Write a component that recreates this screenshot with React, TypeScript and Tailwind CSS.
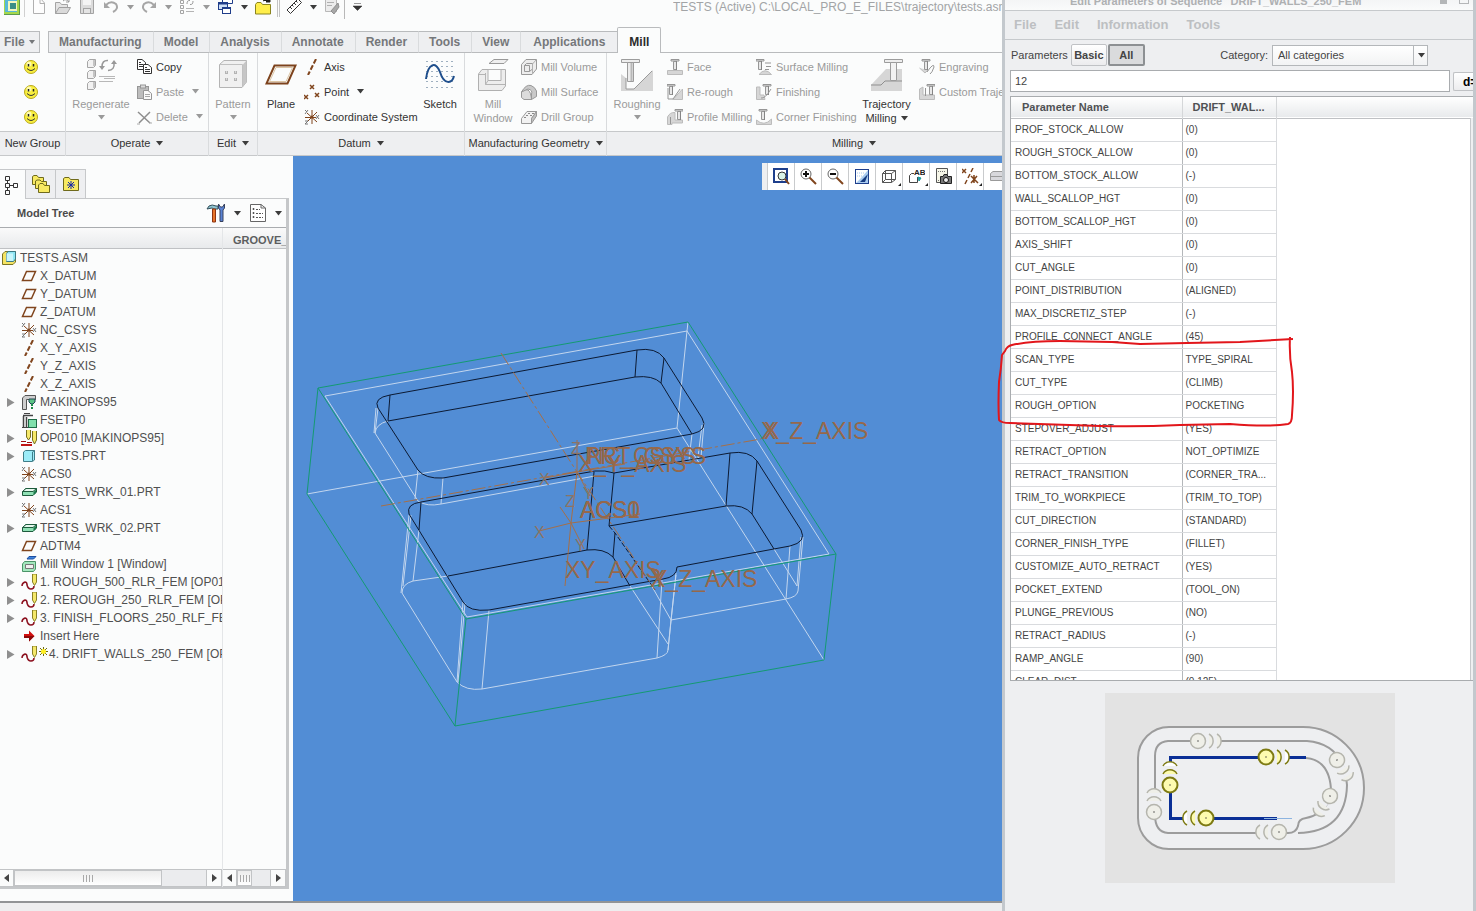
import type { ReactNode } from 'react'
import clsx from 'clsx'

function Svg({ w = 16, h = 16, children }: { w?: number; h?: number; children: ReactNode }) {
  return (
    <svg width={w} height={h} viewBox={`0 0 ${w} ${h}`} fill="none" className="shrink-0" aria-hidden="true">
      {children}
    </svg>
  )
}

function Caret({ muted }: { muted?: boolean }) {
  return (
    <svg width="7" height="5" viewBox="0 0 7 5" className="shrink-0" aria-hidden="true">
      <path d="M0 0H7L3.5 4.5Z" fill={muted ? '#9a9a9a' : '#3c3c3c'} />
    </svg>
  )
}

/* ---------- quick access icons ---------- */

const AppIcon = () => (
  <Svg>
    <rect width="16" height="16" fill="#a5d84c" />
    <rect x="1" y="0" width="12" height="13" fill="#58b8d8" />
    <rect x="4" y="2" width="9" height="10" fill="#f3f7c0" />
    <rect x="6" y="4" width="6" height="6" fill="#3a8f86" />
    <path d="M0 15.5H16M15.5 0V16" stroke="#5c9a50" />
  </Svg>
)
const NewIcon = () => (
  <Svg>
    <path d="M2.5 -1V14.5H13.5V4L9 -1M9 -1V4.5H13.5" stroke="#b0b0b0" fill="#fdfdfd" />
  </Svg>
)
const OpenIcon = () => (
  <Svg>
    <path d="M.5 14.5V3.5H5L6.500 5.500H12.500V8.500" fill="#e4e4e4" stroke="#a4a4a4" />
    <path d="M.5 14.500L4 8.500H15.500L12 14.500Z" fill="#dadada" stroke="#a0a0a0" />
    <path d="M8 2Q11 -1 14 3M14 0V3H11" stroke="#999" />
  </Svg>
)
const SaveIcon = () => (
  <Svg>
    <path d="M1.500 0V14.500H14.500V0" fill="#dcdcdc" stroke="#a4a4a4" />
    <rect x="4" y="0" width="8" height="6" fill="#f4f4f4" />
    <rect x="4.500" y="9.500" width="7" height="5" fill="#e4e4e4" stroke="#a4a4a4" />
  </Svg>
)
const UndoIcon = () => (
  <Svg>
    <path d="M3 6Q8 1 13 5Q16 10 10 13" stroke="#a6a6a6" strokeWidth="2" />
    <path d="M1 3V9H7Z" fill="#a6a6a6" />
  </Svg>
)
const RedoIcon = () => (
  <Svg>
    <path d="M13 6Q8 1 3 5Q0 10 6 13" stroke="#a6a6a6" strokeWidth="2" />
    <path d="M15 3V9H9Z" fill="#a6a6a6" />
  </Svg>
)
const RegenSmallIcon = () => (
  <Svg>
    <path d="M1.500 1.500H4.500V4.500H1.500ZM1.500 6.500H4.500V9.500H1.500ZM1.500 11.500H4.500V14.500H1.500Z" stroke="#a4a4a4" />
    <path d="M7 9.500H15M7 12.500H15" stroke="#b4b4b4" />
    <path d="M8 5Q8 1 11 1.500M14 2Q14 6 11 5.500" stroke="#999" />
  </Svg>
)
const WindowsIcon = () => (
  <Svg>
    <path d="M5.500 0V4.500H15.500V0" fill="#fff" stroke="#1f3d8a" />
    <rect x="1.500" y="3.500" width="9" height="7" fill="#cfe0f6" stroke="#1f3d8a" />
    <path d="M1 4.500H11" stroke="#1f3d8a" strokeWidth="2" />
    <rect x="5.500" y="8.500" width="8" height="6" fill="#fff" stroke="#1f3d8a" />
    <path d="M5 9.500H14" stroke="#1f3d8a" />
  </Svg>
)
const CloseFolderIcon = () => (
  <Svg>
    <path d="M.5 15V5.500L2 3.500H6L7.500 5.500H15.500V15Z" fill="#ffee4a" stroke="#8a8420" />
    <path d="M8 2Q11 -1 14 2M15 -1V3H11Z" stroke="#222" fill="#222" />
  </Svg>
)
const RulerIcon = () => (
  <Svg>
    <path d="M1 11L12 0L15.500 3.500L4.500 14.500Z" fill="#fff" stroke="#333" />
    <path d="M4 8L6 10M6 6L7.500 7.500M8 4L10 6M10 2L11.500 3.500" stroke="#333" />
  </Svg>
)
const PaperIcon = () => (
  <Svg>
    <path d="M1.500 0V12.500H12.500V0" fill="#ececec" stroke="#b8b8b8" />
    <path d="M3 3.500H10M3 6.500H8" stroke="#b0b0b0" />
    <path d="M7 12L14 4L15 8L10 15Z" fill="#a8a8a8" stroke="#8f8f8f" />
  </Svg>
)

/* ---------- ribbon icons ---------- */

const Smiley = () => (
  <Svg>
    <circle cx="8" cy="8" r="6.500" fill="#f8ee3e" stroke="#b9a81c" />
    <circle cx="6" cy="5" r="2.500" fill="#fdfab0" />
    <path d="M5.500 5V7.500M10.500 5V7.500" stroke="#222" strokeWidth="1.500" />
    <path d="M4 9.500Q8 13.500 12 9.500" stroke="#333" />
  </Svg>
)
const RegenerateIcon = () => (
  <Svg w={32} h={33}>
    <g fill="#f2f2f2" stroke="#a6a6a6">
      <path d="M2.500 3.500L4.500 1.500H10.500V7.500L8.500 9.500H2.500Z" />
      <path d="M2.500 14.500L4.500 12.500H10.500V18.500L8.500 20.500H2.500Z" />
      <path d="M2.500 25.500L4.500 23.500H10.500V29.500L8.500 31.500H2.500Z" />
      <path d="M9 2V8M9 13V19M9 24V30" strokeWidth="2" stroke="#c4c4c4" />
    </g>
    <path d="M14 18.500H30M14 23.500H28M19 20.500H30" stroke="#b8b8b8" />
    <path d="M17 9Q17 2 23 2.500M29 5Q30 12 23 12.500" stroke="#989898" strokeWidth="1.500" />
    <path d="M14 8H20L17 12ZM26 6H32L29 2Z" fill="#989898" />
  </Svg>
)
const CopyIcon = () => (
  <Svg>
    <path d="M1.500 .5H6L9.500 3.500V10.500H1.500Z" fill="#fff" stroke="#333" />
    <path d="M3 3.500H5M3 5.500H7M3 7.500H7" stroke="#333" />
    <path d="M7.500 5.500H12L15.500 8.500V14.500H7.500Z" fill="#fff" stroke="#333" />
    <path d="M9 8.500H11M9 10.500H14M9 12.500H14" stroke="#333" />
  </Svg>
)
const PasteIcon = () => (
  <Svg>
    <rect x="1.500" y="2.500" width="11" height="12" fill="#bdbdbd" stroke="#969696" />
    <rect x="4.500" y="1" width="5" height="3" fill="#dcdcdc" stroke="#969696" />
    <path d="M7.500 6.500H12L15.500 9.500V15.500H7.500Z" fill="#fafafa" stroke="#969696" />
    <path d="M9 10.500H14M9 12.500H14" stroke="#a8a8a8" />
  </Svg>
)
const DeleteIcon = () => (
  <Svg>
    <path d="M2 3L14 14M14 3L3 14" stroke="#8d8d8d" strokeWidth="1.500" />
    <path d="M13 14H16M1 15H4" stroke="#aaa" />
  </Svg>
)
const PatternIcon = () => (
  <Svg w={32} h={32}>
    <path d="M2.500 6.500L7 2.500H29.500V24L25 29.500H2.500Z" fill="#f0f0f0" stroke="#b4b4b4" />
    <path d="M25.500 7L29.500 2.500V24L25.500 29Z" fill="#c6c6c6" />
    <path d="M3 6.500H25.500V29" stroke="#c0c0c0" />
    <g fill="#b4b4b4">
      <path d="M8 13H11V16H8ZM17 13H20V16H17ZM8 20H11V23H8ZM17 20H20V23H17Z" />
    </g>
    <path d="M9 14H10M18 14H19M9 21H10M18 21H19" stroke="#fff" />
  </Svg>
)
const PlaneIcon = () => (
  <Svg w={32} h={32}>
    <path d="M9.500 7.500H30.500L22.500 25.500H1.500Z" stroke="#7d431d" strokeWidth="2" />
    <path d="M11 9.500H27.500L21 23.500H4.500Z" stroke="#dcc5a4" />
  </Svg>
)
const AxisIcon = () => (
  <Svg>
    <path d="M12 0L4 16" stroke="#80451d" strokeWidth="2" strokeDasharray="5 2" />
  </Svg>
)
const PointIcon = () => (
  <Svg>
    <path d="M6 1L10 5M10 1L6 5M0 11L4 15M4 11L0 15M11 9L15 13M15 9L11 13" stroke="#80451d" strokeWidth="1.500" />
  </Svg>
)
const CsysIcon = () => (
  <Svg>
    <path d="M8 1V15M1 8.500H12M3 4L13 13M13 3L3 13" stroke="#80451d" />
    <path d="M1 1L3 3M4 1L1 5M12 6L15 10M15 6L12 10M1 12H4L1 15H4" stroke="#777" />
    <circle cx="8" cy="8" r="1.500" fill="#80451d" />
  </Svg>
)
const SketchIcon = () => (
  <Svg w={32} h={32}>
    <path d="M2 3.500H31M2 8.500H31M2 13.500H31M2 18.500H31M2 23.500H31M2 29.500H31" stroke="#9fb0c0" strokeDasharray="2 3" />
    <path d="M2 21C4 5 12 3 16 14C20 27 28 26 30 18" stroke="#1e4e8c" strokeWidth="2" />
  </Svg>
)
const MillWindowIcon = () => (
  <Svg w={32} h={34}>
    <path d="M17 1.500H31L27 5.500H12Z" fill="#efefef" stroke="#999" />
    <path d="M1.500 16L5 11.500H11V22.500H24V11.500H28.500V28L25 32.500H1.500Z" fill="#ededed" stroke="#b0b0b0" />
    <path d="M8.500 15V26.500H28" stroke="#b4b4b4" />
    <path d="M8.500 26.500L11 22.500M11 11.500H24M2 16.500H8" stroke="#b4b4b4" />
  </Svg>
)
const MillVolumeIcon = () => (
  <Svg>
    <path d="M.5 5.500L5 .5H15.500V10L11 15.500H.5Z" fill="#ededed" stroke="#999" />
    <path d="M3.500 6.500H8.500V12.500H3.500ZM5.500 4.500H11.500V10L8.500 12.500M3.500 6.500L5.500 4.500" stroke="#999" />
    <path d="M11.500 5V15M11.500 5L15 1" stroke="#b0b0b0" />
  </Svg>
)
const MillSurfaceIcon = () => (
  <Svg>
    <path d="M.5 13.500V8Q4 4 7 6Q10 8 10.500 15.500H3Z" fill="#dcdcdc" stroke="#999" />
    <path d="M.5 8Q5 0 10 1.500Q14 3 15.500 7V12.500L10.500 15.500V10Q12 6 7 5Z" fill="#c9c9c9" stroke="#999" />
  </Svg>
)
const DrillGroupIcon = () => (
  <Svg>
    <path d="M.5 9.500L6 2.500H15.500L10.500 9.500V14.500H.5Z" fill="#f2f2f2" stroke="#999" />
    <path d="M10.500 9.500L15.500 2.500V7L10.500 14.500Z" fill="#c0c0c0" stroke="#999" />
    <path d="M5 6.500H7M9 6.500H11M7 4.500H9M11 4.500H13M3 8.500H5" stroke="#888" />
  </Svg>
)
const RoughingIcon = () => (
  <Svg w={34} h={34}>
    <path d="M1 16L6 20V31H14L33 12V33H1Z" fill="#d6d6d6" />
    <path d="M6 20V31H14L32 13" stroke="#9a9a9a" />
    <path d="M1.500 1.500H19.500V4.500H1.500Z" fill="#eee" stroke="#9c9c9c" />
    <path d="M7.500 4.500H13.500V23.500H7.500Z" fill="#ececec" stroke="#9c9c9c" />
    <path d="M11.500 5V23" stroke="#b8b8b8" strokeWidth="2" />
  </Svg>
)
const TrajectoryIcon = () => (
  <Svg w={34} h={34}>
    <path d="M1 27L16 11H32V33H1Z" fill="#d6d6d6" />
    <path d="M1 27H11L15 23H32" stroke="#8f8f8f" />
    <path d="M14.500 1.500H32.500V4.500H14.500Z" fill="#eee" stroke="#9c9c9c" />
    <path d="M20.500 4.500H26.500V22.500H20.500Z" fill="#f2f2f2" stroke="#9c9c9c" />
  </Svg>
)

// small greyed-out milling steps: a T shaped tool over differently cut stock
function MillIcon({ tool, stock, extra }: { tool: number; stock: string; extra?: string }) {
  return (
    <Svg>
      <path d={stock} fill="#d6d6d6" stroke="#bcbcbc" />
      <g transform={`translate(${tool} 0)`}>
        <path d="M0 .5H8V2H0ZM2.500 2.500H5.500V10.500H2.500Z" fill="#e8e8e8" stroke="#969696" />
        <path d="M5.500 2V11" stroke="#858585" />
      </g>
      {extra && <path d={extra} stroke="#969696" />}
    </Svg>
  )
}

/* ---------- tree icons ---------- */

const AsmIcon = () => (
  <Svg>
    <path d="M1.500 4L4 1.500H14.500V12L12 14.500H1.500Z" fill="#f5e463" stroke="#7b7524" />
    <path d="M5.500 3.500L7 1.500H14.500V9L12.500 11.500H5.500Z" fill="#8fe6f4" stroke="#3c7a85" />
    <path d="M5.500 3.500H12V11H5.500Z" fill="#c8f5fb" />
  </Svg>
)
const DatumIcon = () => (
  <Svg>
    <path d="M5.500 3.500H14.500L10.500 12.500H1.500Z" stroke="#80451d" strokeWidth="1.500" />
  </Svg>
)
const MachineIcon = () => (
  <Svg>
    <path d="M1.500 15.500V4L4 1.500H14.500V5.500H5.500V15.500Z" fill="#cfcfcf" stroke="#555" />
    <path d="M8 5H14V8L12 10H10L8 8Z" fill="#5cc485" stroke="#245" />
    <path d="M11 10V15" stroke="#1d8a46" strokeWidth="2" strokeDasharray="2 1" />
  </Svg>
)
const FixtureIcon = () => (
  <Svg>
    <path d="M2.500 15.500V4M2 3.500H12M5.500 5V15" stroke="#444" strokeWidth="1.500" />
    <path d="M3 1.500H9M1 15.500H7" stroke="#444" />
    <rect x="7.500" y="7.500" width="8" height="8" fill="#7fe0ac" stroke="#1d6b46" />
  </Svg>
)
const OperationIcon = () => (
  <Svg>
    <path d="M5.500 0V7L7.500 10L9.500 7V0M11.500 1V10L13.500 14L15.500 10V1" fill="#f5e86a" stroke="#77701e" />
    <path d="M0 11.500H5M6 12.500H11" stroke="#a01010" />
    <path d="M0 15H11" stroke="#c01414" strokeWidth="2" />
  </Svg>
)
const PartIcon = () => (
  <Svg>
    <path d="M2.500 4L4.500 2.500H13.500V12L11.500 13.500H2.500Z" fill="#9cecf8" stroke="#3f7d88" />
    <path d="M11.500 4V13M11.500 4L13.500 2.500" stroke="#3f7d88" />
  </Svg>
)
const WorkpieceIcon = () => (
  <Svg>
    <path d="M1.500 7.500L5 4.500H15.500V8L12 11.500H1.500Z" fill="#8fe0b4" stroke="#1d5b3c" />
    <path d="M1.500 7.500L5 4.500H15.500L12 7.500Z" fill="#e5f8ee" stroke="#1d5b3c" />
    <path d="M12.500 8L15 6V9L12.500 11Z" fill="#1d7a4c" />
  </Svg>
)
const MillWindowTreeIcon = () => (
  <Svg>
    <path d="M8 .5H15L12.500 3H6Z" fill="#3d86e0" stroke="#1d4ea0" />
    <path d="M1.500 8L3.500 5.500H14.500V13L12.500 15.500H1.500Z" fill="#a4e8be" stroke="#4b9468" />
    <path d="M4.500 8.500H12.500V12.500H4.500Z" fill="#f0f0f0" stroke="#777" />
  </Svg>
)
const SequenceIcon = () => (
  <Svg>
    <path d="M1 12Q1 9 4 8Q6 8 6 11Q7 15 10 15Q13 15 13 12" stroke="#8c1220" strokeWidth="1.500" />
    <path d="M11.500 0V8L13.500 11.500L15.500 8V0Z" fill="#f5e86a" stroke="#8a8226" />
  </Svg>
)
const InsertIcon = () => (
  <Svg>
    <path d="M3 6H8V2.500L13.500 8L8 13.500V10H3Z" fill="#d01010" />
    <path d="M3 10H8V13.500L13.500 8H3Z" fill="#8c0808" />
  </Svg>
)

/* ---------- ribbon building blocks ---------- */

const ribbonTabs = ['Manufacturing', 'Model', 'Analysis', 'Annotate', 'Render', 'Tools', 'View', 'Applications']

function SmallButton({ icon, label, muted, caret }: { icon: ReactNode; label: string; muted?: boolean; caret?: boolean }) {
  return (
    <button className={clsx('flex h-[25px] items-center whitespace-nowrap', muted ? 'text-[#9a9a9a]' : 'text-[#333]')}>
      {icon}
      <span className="ml-1">{label}</span>
      {caret && <span className="ml-2"><Caret muted={muted} /></span>}
    </button>
  )
}

function BigButton({ icon, lines, muted, caret, inlineCaret }: { icon: ReactNode; lines: string[]; muted?: boolean; caret?: boolean; inlineCaret?: boolean }) {
  return (
    <button className={clsx('flex shrink-0 flex-col items-center', muted ? 'text-[#9a9a9a]' : 'text-[#333]')}>
      <span className="flex h-[43px] items-start pt-1">{icon}</span>
      {lines.map((line, i) => (
        <span key={line} className="flex h-[14px] items-center gap-1">
          {line}
          {inlineCaret && i === lines.length - 1 && <Caret />}
        </span>
      ))}
      {caret && <span className="flex h-3 items-center"><Caret muted={muted} /></span>}
    </button>
  )
}

function Group({ label, className, caret = true, children }: { label: string; className: string; caret?: boolean; children: ReactNode }) {
  return (
    <div className={clsx('flex shrink-0 flex-col border-r border-[#d9dbdd]', className)}>
      <div className="flex h-[78px] pt-px">{children}</div>
      <button className="flex h-[25px] items-center justify-center gap-[6px] border-y border-[#c6c8ca] bg-[#eeeff1] pb-px whitespace-nowrap text-[#333]">
        {label}
        {caret && <Caret />}
      </button>
    </div>
  )
}

function QuickButton({ label, children }: { label: string; children: ReactNode }) {
  return (
    <button aria-label={label} className="flex w-6 shrink-0 justify-center">
      {children}
    </button>
  )
}

function QuickCaret({ muted }: { muted?: boolean }) {
  return (
    <button aria-label="More" className="flex w-[14px] shrink-0 justify-center">
      <Caret muted={muted} />
    </button>
  )
}

function Ribbon() {
  return (
    <header className="shrink-0">
      <div className="flex h-[27px] items-start">
        <div className="flex h-[14px] shrink-0 items-center">
          <QuickButton label="Application"><AppIcon /></QuickButton>
          <span className="mr-[2px] h-5 w-px bg-[#d0d0d0]" />
          <QuickButton label="New"><NewIcon /></QuickButton>
          <QuickButton label="Open"><OpenIcon /></QuickButton>
          <QuickButton label="Save"><SaveIcon /></QuickButton>
          <QuickButton label="Undo"><UndoIcon /></QuickButton>
          <QuickCaret muted />
          <QuickButton label="Redo"><RedoIcon /></QuickButton>
          <QuickCaret muted />
          <QuickButton label="Regenerate"><RegenSmallIcon /></QuickButton>
          <QuickCaret muted />
          <QuickButton label="Windows"><WindowsIcon /></QuickButton>
          <QuickCaret />
          <QuickButton label="Close"><CloseFolderIcon /></QuickButton>
          <span className="mx-[2px] h-5 w-[3px] border-x border-[#c4c4c4]" />
          <QuickButton label="Measure"><RulerIcon /></QuickButton>
          <QuickCaret />
          <QuickButton label="Erase"><PaperIcon /></QuickButton>
          <span className="mr-2 h-6 w-px bg-[#b8b8b8]" />
          <button aria-label="Customize toolbar">
            <Svg w={9} h={8}>
              <path d="M1 .5H8M0 3H9L4.500 7.500Z" stroke="#333" fill="#333" strokeWidth=".5" />
            </Svg>
          </button>
        </div>
        <h1 className="ml-auto w-[329px] overflow-hidden text-[12px] leading-[14px] whitespace-nowrap text-[#a2a4a6]">
          {'TESTS (Active) C:\\LOCAL_PRO_E_FILES\\trajectory\\tests.asm'}
        </h1>
      </div>

      <nav className="flex h-[26px] items-end text-[12px] font-bold text-[#75777a]">
        <button className="mr-2 flex h-[22px] w-10 shrink-0 items-center gap-1 border-y border-r border-[#b9bbbd] bg-[#eeeff1] pl-1">
          File
          <svg width="6" height="4" viewBox="0 0 6 4"><path d="M0 0H6L3 4Z" fill="#75777a" /></svg>
        </button>
        {ribbonTabs.map((tab, i) => (
          <button
            key={tab}
            className={clsx(
              'h-[22px] shrink-0 border-y border-y-[#b9bbbd] bg-[#eeeff1]',
              i === 0 && 'border-l border-l-[#b9bbbd]',
              i < ribbonTabs.length - 1 ? 'border-r border-r-[#d9dbdd] pr-[11px] pl-[10px]' : 'px-3',
            )}
          >
            {tab}
          </button>
        ))}
        <button className="h-[26px] shrink-0 rounded-t-xs border-x border-t border-[#b9bbbd] px-[11px] pt-[3px] text-[#2b2b2b]">Mill</button>
        <span className="h-px flex-1 bg-[#b9bbbd]" />
      </nav>

      <div className="flex overflow-hidden text-[11px] leading-[14px]">
        <Group label="New Group" caret={false} className="w-[66px]">
          <div className="flex flex-1 flex-col items-center pr-1">
            {['first', 'second', 'third'].map((n) => (
              <button key={n} aria-label={`New Group ${n}`} className="flex h-[25px] items-center"><Smiley /></button>
            ))}
          </div>
        </Group>
        <Group label="Operate" className="w-[143px]">
          <div className="flex w-[70px] justify-center">
            <BigButton icon={<RegenerateIcon />} lines={['Regenerate']} muted caret />
          </div>
          <div>
            <SmallButton icon={<CopyIcon />} label="Copy" />
            <SmallButton icon={<PasteIcon />} label="Paste" muted caret />
            <SmallButton icon={<DeleteIcon />} label="Delete" muted caret />
          </div>
        </Group>
        <Group label="Edit" className="w-[49px]">
          <div className="flex flex-1 justify-center">
            <BigButton icon={<PatternIcon />} lines={['Pattern']} muted caret />
          </div>
        </Group>
        <Group label="Datum" className="w-[207px]">
          <div className="flex w-[46px] justify-center">
            <BigButton icon={<PlaneIcon />} lines={['Plane']} />
          </div>
          <div className="w-28">
            <SmallButton icon={<AxisIcon />} label="Axis" />
            <SmallButton icon={<PointIcon />} label="Point" caret />
            <SmallButton icon={<CsysIcon />} label="Coordinate System" />
          </div>
          <div className="flex flex-1 justify-center">
            <BigButton icon={<SketchIcon />} lines={['Sketch']} />
          </div>
        </Group>
        <Group label="Manufacturing Geometry" className="w-[142px]">
          <div className="flex w-14 justify-center">
            <BigButton icon={<MillWindowIcon />} lines={['Mill', 'Window']} muted />
          </div>
          <div>
            <SmallButton icon={<MillVolumeIcon />} label="Mill Volume" muted />
            <SmallButton icon={<MillSurfaceIcon />} label="Mill Surface" muted />
            <SmallButton icon={<DrillGroupIcon />} label="Drill Group" muted />
          </div>
        </Group>
        <Group label="Milling" className="w-[495px] grow">
          <div className="flex w-[60px] shrink-0 justify-center">
            <BigButton icon={<RoughingIcon />} lines={['Roughing']} muted caret />
          </div>
          <div className="w-[89px] shrink-0">
            <SmallButton icon={<MillIcon tool={4} stock="M.5 11.500H15.500V15.500H.5Z" />} label="Face" muted />
            <SmallButton icon={<MillIcon tool={0} stock="M6 15.500L15.500 5V15.500Z" extra="M1 4V15H6L13 5" />} label="Re-rough" muted />
            <SmallButton icon={<MillIcon tool={8} stock="M.5 15.500V8Q3 3 8 3.500V11H15.500V14H5V15.500Z" extra="M3.500 15V8" />} label="Profile Milling" muted />
          </div>
          <div className="w-[100px] shrink-0">
            <SmallButton icon={<MillIcon tool={0} stock="M3 15.500Q9 8 15.500 15.500Z" extra="M9 4H15M10 7.500H15M9 10.500H13" />} label="Surface Milling" muted />
            <SmallButton icon={<MillIcon tool={7} stock="M.5 3H4V11H8L9 15.500H.5Z" extra="M5 14Q9 15 15 5" />} label="Finishing" muted />
            <SmallButton icon={<MillIcon tool={3} stock="M.5 11Q8 18 15.500 10V15.500H.5Z" />} label="Corner Finishing" muted />
          </div>
          <div className="flex w-[61px] shrink-0 justify-center">
            <BigButton icon={<TrajectoryIcon />} lines={['Trajectory', 'Milling']} inlineCaret />
          </div>
          <div className="ml-[2px] shrink-0">
            <SmallButton icon={<MillIcon tool={3} stock="M.5 9L6 14L9 11" extra="M8 13Q15 3 15 8Q13 14 11 15" />} label="Engraving" muted />
            <SmallButton icon={<MillIcon tool={8} stock="M.5 15.500V5L4 3V11H15.500V15.500Z" extra="M6.500 4V12" />} label="Custom Trajectory" muted />
          </div>
        </Group>
      </div>
    </header>
  )
}

/* ---------- model tree ---------- */

type TreeItem = { icon: ReactNode; label: string; branch?: boolean; flag?: boolean }

const treeItems: TreeItem[] = [
  { icon: <DatumIcon />, label: 'X_DATUM' },
  { icon: <DatumIcon />, label: 'Y_DATUM' },
  { icon: <DatumIcon />, label: 'Z_DATUM' },
  { icon: <CsysIcon />, label: 'NC_CSYS' },
  { icon: <AxisIcon />, label: 'X_Y_AXIS' },
  { icon: <AxisIcon />, label: 'Y_Z_AXIS' },
  { icon: <AxisIcon />, label: 'X_Z_AXIS' },
  { icon: <MachineIcon />, label: 'MAKINOPS95', branch: true },
  { icon: <FixtureIcon />, label: 'FSETP0' },
  { icon: <OperationIcon />, label: 'OP010 [MAKINOPS95]', branch: true },
  { icon: <PartIcon />, label: 'TESTS.PRT', branch: true },
  { icon: <CsysIcon />, label: 'ACS0' },
  { icon: <WorkpieceIcon />, label: 'TESTS_WRK_01.PRT', branch: true },
  { icon: <CsysIcon />, label: 'ACS1' },
  { icon: <WorkpieceIcon />, label: 'TESTS_WRK_02.PRT', branch: true },
  { icon: <DatumIcon />, label: 'ADTM4' },
  { icon: <MillWindowTreeIcon />, label: 'Mill Window 1 [Window]' },
  { icon: <SequenceIcon />, label: '1. ROUGH_500_RLR_FEM [OP010]', branch: true },
  { icon: <SequenceIcon />, label: '2. REROUGH_250_RLR_FEM [OP010]', branch: true },
  { icon: <SequenceIcon />, label: '3. FINISH_FLOORS_250_RLF_FEM [OP010]', branch: true },
  { icon: <InsertIcon />, label: 'Insert Here' },
  { icon: <SequenceIcon />, label: '4. DRIFT_WALLS_250_FEM [OP010]', branch: true, flag: true },
]

function ScrollBar({ thumb }: { thumb: string }) {
  return (
    <div className="flex h-[18px] border-y border-[#c2c4c6] bg-[#ebecee]">
      <button aria-label="Scroll left" className="flex w-[14px] shrink-0 items-center justify-center border-r border-[#c2c4c6] bg-[#fafbfb]">
        <svg width="5" height="8" viewBox="0 0 5 8"><path d="M5 0V8L0 4Z" fill="#444" /></svg>
      </button>
      <div className="min-w-0 flex-1">
        <div className={clsx('flex h-full items-center justify-center gap-[2px] border border-[#c2c4c6] bg-linear-to-b from-[#ececec] to-white', thumb)}>
          {[1, 2, 3, 4].map((n) => <span key={n} className="h-[7px] w-px bg-[#a9a9a9]" />)}
        </div>
      </div>
      <button aria-label="Scroll right" className="flex w-4 shrink-0 items-center justify-center border-x border-[#c2c4c6] bg-[#fafbfb]">
        <svg width="5" height="8" viewBox="0 0 5 8"><path d="M0 0V8L5 4Z" fill="#444" /></svg>
      </button>
    </div>
  )
}

function ModelTree() {
  return (
    <aside className="flex w-[293px] shrink-0 flex-col pt-[13px] pr-1 pb-3">
      <div className="flex h-[30px] shrink-0">
        <button aria-label="Model Tree" className="flex w-[26px] items-center justify-center border-t border-r border-[#c6c8ca] pr-1">
          <Svg w={15} h={20}>
            <path d="M2.500 1.500H6.500V5.500H2.500ZM2.500 8.500H6.500V12.500H2.500ZM2.500 15.500H6.500V19.500H2.500ZM10.500 8.500H14.500V12.500H10.500ZM4.500 5.500V8.500M4.500 12.500V15.500M6.500 10.500H10.500" stroke="#333" />
          </Svg>
        </button>
        <button aria-label="Folder Browser" className="flex w-[30px] items-center justify-center border-t border-r border-b border-[#c6c8ca] bg-[#eeeff1]">
          <Svg w={20} h={20}>
            <g fill="#f8ea62" stroke="#6f6a1c">
              <path d="M1.500 10.500V2.500L3 1.500H6L7.500 3.500H12.500V10.500Z" />
              <path d="M4.500 14.500V7L6 6H9L10.500 7.500H15.500V14.500Z" />
              <path d="M7.500 18.500V11L9 9.500H12L13.500 11.500H18.500V18.500Z" />
            </g>
          </Svg>
        </button>
        <button aria-label="Favorites" className="flex w-[30px] items-center justify-center border-t border-r border-b border-[#c6c8ca] bg-[#eeeff1]">
          <Svg w={18} h={18}>
            <path d="M1.500 15.500V3.500L3 2.500H7L8.500 4.500H16.500V15.500Z" fill="#f8ea62" stroke="#6f6a1c" />
            <path d="M9 6V14M5 10H13M6 7L12 13M12 7L6 13" stroke="#1428a8" />
          </Svg>
        </button>
        <span className="flex-1 border-b border-[#c6c8ca]" />
      </div>

      <div className="flex min-h-0 flex-1 flex-col border-r-[3px] border-b-2 border-[#c5c7c9]">
        <div className="flex h-[29px] shrink-0 items-center border-b border-[#a9acaf] pr-1 pl-[17px] text-[11px] font-bold text-[#4b4b4b]">
          <h2 className="flex-1">Model Tree</h2>
          <button aria-label="Settings" className="flex items-center gap-2">
            <Svg w={20} h={20}>
              <path d="M1 6L3 3Q6 1 10 3H12V6H8L6 5Z" fill="#8fc4d0" stroke="#35505c" />
              <path d="M6.500 6H9.500V19H6.500Z" fill="#e8752a" stroke="#8d3410" />
              <path d="M12.500 1V5L14 7V18.500H17V7L18.500 5V1L16.500 4H14.500Z" fill="#5a83d4" stroke="#38425e" />
            </Svg>
            <Caret />
          </button>
          <button aria-label="Show" className="ml-2 flex items-center gap-2">
            <Svg w={18} h={20}>
              <path d="M1.500 1.500H12L16.500 5V18.500H1.500ZM12 1.500V5H16.500" fill="#fff" stroke="#666" />
              <path d="M7 6.500H11M7 10.500H14M7 14.500H14" stroke="#555" strokeDasharray="2 1" />
              <path d="M4 5.500H5V6.500H4ZM4 9.500H5V10.500H4ZM4 13.500H5V14.500H4Z" stroke="#555" />
            </Svg>
            <Caret />
          </button>
        </div>

        <div className="flex min-h-0 flex-1">
          <div className="flex w-[223px] shrink-0 flex-col border-r border-[#e4e6e8]">
            <div className="h-[21px] shrink-0 border-b border-[#bfc1c4] bg-linear-to-b from-[#fafafa] to-[#e8eaec]" />
            <ul className="min-h-0 flex-1 overflow-hidden text-[12px] text-[#505050]">
              <li className="flex h-[18px] items-center gap-[3px] pl-px"><AsmIcon />TESTS.ASM</li>
              {treeItems.map((item) => (
                <li key={item.label} className="flex h-[18px] items-center pl-[7px] whitespace-nowrap">
                  <span className="w-[14px] shrink-0">
                    {item.branch && (
                      <svg width="8" height="9" viewBox="0 0 8 9"><path d="M0 0V9L7.500 4.500Z" fill="#8f8f8f" /></svg>
                    )}
                  </span>
                  {item.icon}
                  {item.flag && (
                    <span className="ml-[2px] mb-1">
                      <Svg w={9} h={10}>
                        <path d="M4.500 0V9M0 4.500H9M1 1L8 8M8 1L1 8" stroke="#6d6a10" />
                        <circle cx="4.500" cy="4.500" r="2.500" fill="#ffef20" />
                      </Svg>
                    </span>
                  )}
                  <span className={item.flag ? 'ml-px' : 'ml-[3px]'}>{item.label}</span>
                </li>
              ))}
            </ul>
            <ScrollBar thumb="w-[148px]" />
          </div>
          <div className="flex min-w-0 flex-1 flex-col">
            <div className="h-[21px] shrink-0 overflow-hidden border-b border-[#bfc1c4] bg-linear-to-b from-[#fafafa] to-[#e8eaec] pt-1 pl-[10px] text-[11px] leading-[16px] font-bold whitespace-nowrap text-[#5c5e60]">
              GROOVE_
            </div>
            <div className="flex-1" />
            <ScrollBar thumb="w-[15px]" />
          </div>
        </div>
      </div>
    </aside>
  )
}

/* ---------- graphics area ---------- */

const viewTools = [
  {
    label: 'Refit',
    icon: (
      <>
        <rect x="1" y="1" width="13" height="13" fill="#fff" stroke="#1e3f8c" strokeWidth="2" />
        <circle cx="9" cy="8" r="4" fill="#d8f2e6" stroke="#333" />
        <path d="M12 11L16 16" stroke="#80451d" strokeWidth="2" />
      </>
    ),
  },
  {
    label: 'Zoom In',
    icon: (
      <>
        <circle cx="6" cy="6" r="5" fill="#fff" stroke="#666" />
        <path d="M3 6H9M6 3V9" stroke="#111" strokeWidth="2" />
        <path d="M9.500 9.500L16 16" stroke="#80451d" strokeWidth="2" />
      </>
    ),
  },
  {
    label: 'Zoom Out',
    icon: (
      <>
        <circle cx="6" cy="6" r="5" fill="#fff" stroke="#666" />
        <path d="M3 6H9" stroke="#111" strokeWidth="2" />
        <path d="M9.500 9.500L16 16" stroke="#80451d" strokeWidth="2" />
      </>
    ),
  },
  {
    label: 'Repaint',
    icon: (
      <>
        <rect x="1.500" y="1.500" width="13" height="14" fill="#fff" stroke="#1e3f8c" />
        <path d="M2 15L8 9L14 2V15Z" fill="#a9ccf0" />
        <path d="M6 14L14 6L11 14Z" fill="#153a80" />
        <path d="M3 5H10M3 8H8" stroke="#a5c8ee" strokeDasharray="1 1" />
      </>
    ),
  },
  {
    label: 'Display Style',
    menu: true,
    icon: (
      <path d="M1.500 5.500H10.500V14.500H1.500ZM4.500 2.500H14.500V11.500H4.500ZM1.500 5.500L4.500 2.500M10.500 5.500L14.500 2.500M10.500 14.500L14.500 11.500M1.500 14.500L4.500 11.500" stroke="#555" />
    ),
  },
  {
    label: 'Saved Orientations',
    menu: true,
    icon: (
      <>
        <path d="M1.500 7.500L3.500 5.500H6M1.500 7.500V14.500H9.500V9" stroke="#444" />
        <path d="M10 9L13 10L11 13Z" fill="#1f9aa0" stroke="#1f9aa0" />
        <text x="6" y="7" fontSize="8" fontWeight="bold" fill="#222">AB</text>
      </>
    ),
  },
  {
    label: 'View Manager',
    icon: (
      <>
        <path d="M1.500 .5H12.500V14.500H1.500Z" fill="#f6f6e8" stroke="#555" />
        <path d="M3 3.500H11M3 12.500H5" stroke="#777" strokeDasharray="1 1" />
        <path d="M5.500 8.500H8L9 6.500H12L13 8.500H16.500V15.500H5.500Z" fill="#777" stroke="#222" />
        <circle cx="11" cy="12" r="2.500" fill="#eee" stroke="#111" />
      </>
    ),
  },
  {
    label: 'Datum Display',
    menu: true,
    icon: (
      <path d="M0 1L4 5M4 1L0 5M11 0L9 4M8 6L6 10M5 12L3 16M9 8L16 15M15 8L9 15M12 7V15" stroke="#80451d" strokeWidth="1.500" />
    ),
  },
  {
    label: 'Annotation Display',
    icon: <path d="M1.500 5.500L4 3.500H15.500V11L13 12.500H1.500ZM1.500 8.500H15" fill="#d8d8dc" stroke="#9a9a9a" />,
  },
]

function Viewport() {
  return (
    <main className="relative min-w-0 flex-1 overflow-hidden bg-[#528dd5]">
      <svg width="709" height="746" viewBox="293 156 709 746" fill="none" strokeWidth="1" role="img" aria-label="Wireframe of the pocketed block">
        <g stroke="#c3d6ee">
          <path d="M325 396L687 331L829 554L467 617Z" />
          <path d="M688 322L687 331L677 428L307 494M677 428L824 660" />
          {/* upper pocket, hidden floor */}
          <path d="M388 421Q376 424 375 433L418 501Q427 507 441 504L595 476M378 408L375 433M376 408L374 433M418 470L415 499M443 478L441 504" />
          <path d="M692 434L689 460M704 423L701 457M702 425L698 457M689 460Q697 460 701 456" />
          {/* lower pocket, hidden floor */}
          <path d="M448 576L413 581Q402 584 402 593L457 682Q466 691 482 689L657 658Q668 655 668 650L676 573" />
          <path d="M409 515L401 593M411 515L403 586M419 530L413 581M463 602L457 682M465 603L458 682M489 610L482 689M662 580L657 658M630 586L668 644M650 583L671 620" />
          <path d="M676 575L671 620L786 599Q797 597 798 591L803 537M671 620L668 650M790 546L786 599M774 549L797 586L801 537" />
        </g>
        <g stroke="#149a72">
          <path d="M318 388L688 322L836 554L824 660L455 726L307 494ZL466 619L455 726M466 619L836 554" />
        </g>
        <g stroke="#0c1a33">
          <path d="M390 395L637 350Q656 347 664 358L702 418Q709 430 692 434L443 478Q425 479 418 470L378 408Q373 398 390 395Z" />
          <path d="M390 395L388 421L635 377Q653 375 661 383L692 434M637 350L635 377M664 358L661 383" />
          <path d="M421 502L595 471Q605 470 614 473L730 453Q749 450 757 461L801 530Q807 542 790 546L677 567Q677 577 663 579L489 610Q469 612 463 602L409 514Q406 504 421 502Z" />
          <path d="M421 502L419 530M594 472L587 550M614 473L609 526M730 453L726 506M757 461L752 514M615 533L613 557" />
          <path d="M609 526L726 506Q744 504 752 514L774 549M448 576L587 550Q604 548 613 557L630 586" />
          <path d="M609 526L615 533L655 590" strokeDasharray="5 2" />
        </g>
        <g stroke="#a56f48">
          <path d="M381 506L761 439" strokeDasharray="14 3 3 3" />
          <path d="M501 353L577 472L655 590" strokeDasharray="14 3 3 3" />
          <path d="M577 440L577 472L571 523L565 586M577 472L545 478M577 472L590 496M571 523L539 531M571 523L640 514M571 523L584 549M571 523L560 507M577 472L625 464" />
        </g>
        <g fill="#8b7466" fontSize="16">
          <text x="571" y="454">Z</text>
          <text x="539" y="485">X</text>
          <text x="583" y="499">Y</text>
          <text x="565" y="507">Z</text>
          <text x="534" y="538">X</text>
          <text x="575" y="551">Y</text>
        </g>
        <g fill="#96684a" fontSize="23">
          <text x="761" y="439">X_Z_AXIS</text>
          <text x="764" y="439">X</text>
          <text x="585" y="464">PRT_CSYS</text>
          <text x="587" y="464">NC_CSYS</text>
          <text x="578" y="472">X_Y_AXIS</text>
          <text x="580" y="518">ACS0</text>
          <text x="580" y="518">ACS1</text>
          <text x="565" y="578">XY_AXIS</text>
          <text x="650" y="587">X_Z_AXIS</text>
          <text x="652" y="587">Y</text>
        </g>
      </svg>

      <div className="absolute top-[7px] right-0 flex w-60 overflow-hidden bg-[#eeeff1] pl-[5px]">
        {viewTools.map((tool) => (
          <button key={tool.label} aria-label={tool.label} className="relative flex h-[27px] w-[27px] shrink-0 items-center justify-center border-l border-[#c9cbcd] bg-white">
            <Svg w={17} h={17}>{tool.icon}</Svg>
            {tool.menu && (
              <svg width="3" height="3" viewBox="0 0 3 3" className="absolute right-px bottom-1"><path d="M3 0V3H0Z" fill="#222" /></svg>
            )}
          </button>
        ))}
      </div>
    </main>
  )
}

/* ---------- parameter window ---------- */

const parameters = [
  ['PROF_STOCK_ALLOW', '(0)'],
  ['ROUGH_STOCK_ALLOW', '(0)'],
  ['BOTTOM_STOCK_ALLOW', '(-)'],
  ['WALL_SCALLOP_HGT', '(0)'],
  ['BOTTOM_SCALLOP_HGT', '(0)'],
  ['AXIS_SHIFT', '(0)'],
  ['CUT_ANGLE', '(0)'],
  ['POINT_DISTRIBUTION', '(ALIGNED)'],
  ['MAX_DISCRETIZ_STEP', '(-)'],
  ['PROFILE_CONNECT_ANGLE', '(45)'],
  ['SCAN_TYPE', 'TYPE_SPIRAL'],
  ['CUT_TYPE', '(CLIMB)'],
  ['ROUGH_OPTION', 'POCKETING'],
  ['STEPOVER_ADJUST', '(YES)'],
  ['RETRACT_OPTION', 'NOT_OPTIMIZE'],
  ['RETRACT_TRANSITION', '(CORNER_TRA...'],
  ['TRIM_TO_WORKPIECE', '(TRIM_TO_TOP)'],
  ['CUT_DIRECTION', '(STANDARD)'],
  ['CORNER_FINISH_TYPE', '(FILLET)'],
  ['CUSTOMIZE_AUTO_RETRACT', '(YES)'],
  ['POCKET_EXTEND', '(TOOL_ON)'],
  ['PLUNGE_PREVIOUS', '(NO)'],
  ['RETRACT_RADIUS', '(-)'],
  ['RAMP_ANGLE', '(90)'],
  ['CLEAR_DIST', '(0.125)'],
]

// cutter disc followed by two fading positions; angle points to the trail
function Cutter({ x, y, angle, active }: { x: number; y: number; angle: number; active?: boolean }) {
  const line = active ? '#7d7a12' : '#b5b5ad'
  const fill = active ? '#fdfbb0' : '#efefe8'
  return (
    <g transform={`translate(${x} ${y}) rotate(${angle})`} stroke={line} strokeWidth="1.500">
      <path d="M0 -3H23V3H0Z" fill="#eeeff1" stroke="none" />
      <path d="M19 -7A8 8 0 0 1 19 7" fill={active ? '#fff' : fill} />
      <path d="M11 -7A8 8 0 0 1 11 7" fill={fill} />
      <circle r="7.500" fill={fill} strokeWidth={active ? 2 : 1.500} />
      <circle r=".7" fill="#333" stroke="none" />
    </g>
  )
}

function ToolpathPreview() {
  return (
    <svg width="290" height="190" viewBox="1105 693 290 190" fill="none" className="bg-[#e3e3e3]" role="img" aria-label="Spiral scan preview">
      <path d="M1169 727H1303A61 61 0 0 1 1303 849H1169A31 31 0 0 1 1138 818V758A31 31 0 0 1 1169 727Z" fill="#eeeff1" stroke="#9c9c9c" strokeWidth="2" />
      <path d="M1298 833Q1346 832 1347 785Q1344 744 1307 741H1168Q1155 742 1155 756V815Q1155 832 1168 833H1288Q1296 833 1298 826Q1298 819 1306 818Q1320 816 1330 800" stroke="#9c9c9c" strokeWidth="2" />
      <path d="M1306 758Q1329 760 1331 789" stroke="#9c9c9c" strokeWidth="2" />
      <path d="M1306 757.500H1170.500V818.500H1277" stroke="#0a2f96" strokeWidth="3" />
      <path d="M1264 818.500H1292" stroke="#8db4e0" />
      <Cutter x={1198} y={741} angle={0} />
      <Cutter x={1337} y={760} angle={57} />
      <Cutter x={1330} y={796} angle={125} />
      <Cutter x={1279} y={832} angle={180} />
      <Cutter x={1154} y={812} angle={270} />
      <Cutter x={1266} y={757} angle={0} active />
      <Cutter x={1170} y={785} angle={270} active />
      <Cutter x={1206} y={818} angle={180} active />
    </svg>
  )
}

function ParameterWindow() {
  return (
    <section className="relative flex w-[474px] shrink-0 flex-col border-x-[3px] border-[#c3c8cd] bg-[#eeeff1] text-[11px] text-[#444]">
      <div className="flex h-[11px] shrink-0 items-end overflow-hidden border-b border-[#c6c9cc] bg-linear-to-b from-[#f4f5f6] to-[#fafbfb] pl-[65px] text-[11px] leading-[18px] font-bold text-[#aeb0b2]">
        <h2 className="flex-1 whitespace-nowrap">Edit Parameters of Sequence "DRIFT_WALLS_250_FEM"</h2>
        <button aria-label="Minimize" className="mr-3 mb-[6px] h-1 w-[7px] bg-[#b4b6b8]" />
        <button aria-label="Maximize" className="mr-1 mb-[6px] h-2 w-[10px] border border-[#b4b6b8]" />
      </div>
      <nav className="flex h-[29px] shrink-0 items-center gap-[18px] border-b border-[#c6c9cc] pl-[9px] text-[13px] font-bold text-[#bdbfc2]">
        {['File', 'Edit', 'Information', 'Tools'].map((m) => <button key={m}>{m}</button>)}
      </nav>

      <div className="flex h-[30px] shrink-0 items-center pl-[6px]">
        <span>Parameters</span>
        <button className="ml-[3px] h-[22px] w-9 rounded-[2px] border border-[#c0c2c5] bg-linear-to-b from-white to-[#ececee] font-bold">Basic</button>
        <button className="ml-px h-[22px] w-[37px] rounded-[2px] border-2 border-[#8d9093] bg-[#dadbdd] font-bold">All</button>
        <label htmlFor="category" className="ml-auto">Category:</label>
        <div className="relative mr-[45px] ml-1">
          <select id="category" className="h-[21px] w-[156px] appearance-none border border-[#b4b7ba] bg-linear-to-b from-white to-[#f2f3f4] pl-[5px] text-[11px]">
            <option>All categories</option>
          </select>
          <span className="pointer-events-none absolute inset-y-0 right-0 flex w-[15px] items-center justify-center border-l border-[#b4b7ba]">
            <Caret />
          </span>
        </div>
      </div>

      <div className="flex h-[22px] shrink-0 gap-[3px] overflow-hidden pl-[5px]">
        <input aria-label="Value" defaultValue="12" className="min-w-0 flex-1 border border-[#a9acaf] bg-white pl-1" />
        <button className="mt-[2px] h-[19px] w-5 overflow-hidden rounded-l-[2px] border-y border-l border-[#c0c2c5] bg-linear-to-b from-white to-[#ececee] pl-[9px] text-left text-[12px] font-bold whitespace-nowrap text-black">d=</button>
      </div>

      <div className="relative mt-1 ml-[5px] min-h-0 flex-1 overflow-hidden border-t border-b border-l border-[#a9acaf] bg-white">
        <table className="w-full table-fixed border-collapse text-left">
          <thead>
            <tr className="h-[21px] border-b border-[#bfc1c4] bg-linear-to-b from-white to-[#e8eaec] text-[#4f5154]">
              <th className="w-[171px] border-r border-[#d5d7d9] p-0 pl-[11px] leading-[20px]">Parameter Name</th>
              <th className="w-[94px] border-r border-[#d5d7d9] p-0 pl-[10px] leading-[20px]">DRIFT_WAL...</th>
              <th className="p-0" />
            </tr>
          </thead>
          <tbody className="text-[10px]">
            {parameters.map(([name, value]) => (
              <tr key={name} className="h-[23px]">
                <td className="border-r border-b border-r-[#b4b7ba] border-b-[#d9dbde] p-0 pl-1">{name}</td>
                <td className="border-r border-b border-[#d9dbde] p-0 pl-[3px] whitespace-nowrap">{value}</td>
                <td className="p-0" />
              </tr>
            ))}
          </tbody>
        </table>
        <div className="absolute top-[21px] right-0 bottom-0 w-[3px] border-l border-[#c6c9cc] bg-[#eeeff1]" />
      </div>

      <div className="flex h-[230px] shrink-0 items-start pt-3 pl-[100px]">
        <ToolpathPreview />
      </div>

      {/* hand drawn mark round the scan settings */}
      <svg width="300" height="96" viewBox="996 334 300 96" fill="none" className="pointer-events-none absolute top-[334px] -left-[9px] z-10" aria-hidden="true">
        <path
          d="M1293 339L1240 342L1187 343L1140 344L1112 342L1060 341Q1030 341 1012 345Q1007 346 1005 351L1002 355Q1001 370 999 382Q998 405 999 420Q1001 423 1010 423L1100 426Q1140 427 1180 425L1230 424Q1270 427 1288 424Q1292 423 1292 415Q1294 390 1292 372Q1289 355 1290 337"
          stroke="#e2161b"
          strokeWidth="2"
        />
      </svg>
    </section>
  )
}

export default function App() {
  return (
    <div className="flex h-screen overflow-hidden bg-[#fbfcfc] [font-family:'Liberation_Sans',Arial,sans-serif]">
      <div className="flex min-w-0 flex-1 flex-col">
        <Ribbon />
        <div className="flex min-h-0 flex-1">
          <ModelTree />
          <Viewport />
        </div>
        <footer className="h-[10px] shrink-0 border-t-2 border-[#929496] bg-[#eeeeef]" />
      </div>
      <ParameterWindow />
    </div>
  )
}
